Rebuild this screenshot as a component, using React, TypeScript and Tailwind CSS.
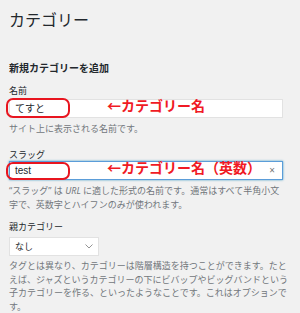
export default function App() {
  return (
    <div className="h-[313px] w-[300px] overflow-hidden bg-[#f1f1f1] pl-[9px] font-['Noto_Sans','Noto_Sans_CJK_JP',sans-serif] text-[#23282d]">
      <h1 className="mt-[8px] text-[16px] leading-[24px] font-normal">カテゴリー</h1>

      <h2 className="mt-[29px] text-[10px] leading-[14px] font-bold">新規カテゴリーを追加</h2>

      <div className="mt-[10px] text-[9px] leading-[12px]">名前</div>
      <div className="relative mt-[2px] h-[19px] w-[274px]">
        <div className="flex h-full items-center border border-[#e2e2e2] bg-white pl-[5px] text-[10px]">てすと</div>
        <div className="absolute left-[-3px] top-[-1px] h-[20px] w-[64px] rounded-[7px] border-2 border-[#e8151f]" />
        <div className="absolute left-[98px] top-[-3px] text-[14px] leading-[20px] font-bold text-[#f01a24]">←カテゴリー名</div>
      </div>
      <p className="mt-[5px] text-[9px] leading-[12px] text-[#72777c]">サイト上に表示される名前です。</p>

      <div className="mt-[14px] text-[9px] leading-[12px]">スラッグ</div>
      <div className="relative h-[19px] w-[274px]">
        <div className="flex h-full items-center border border-[#5b9dd9] bg-white pl-[5px] text-[10px] shadow-[0_0_2px_rgba(30,140,190,0.8)]">
          <span className="font-['Liberation_Sans',sans-serif]">test</span>
          <span className="ml-auto mr-[7px] text-[10px] text-[#777]">×</span>
        </div>
        <div className="absolute left-[-3px] top-[1px] h-[18px] w-[64px] rounded-[7px] border-2 border-[#e8151f]" />
        <div className="absolute left-[98px] top-[-3px] text-[14px] leading-[20px] font-bold text-[#f01a24]">←カテゴリー名（英数）</div>
      </div>
      <p className="mt-[4px] text-[9px] leading-[13.5px] text-[#72777c]">
        “スラッグ” は <i>URL</i> に適した形式の名前です。通常はすべて半角小文
        <br />
        字で、英数字とハイフンのみが使われます。
      </p>

      <div className="mt-[10px] text-[9px] leading-[12px]">親カテゴリー</div>
      <div className="mt-[4px] flex h-[19px] w-[90px] items-center border border-[#e2e2e2] bg-white pl-[5px] pr-[5px] text-[9px]">
        なし
        <svg className="ml-auto" width="8" height="5" viewBox="0 0 8 5" fill="none">
          <polyline points="0.5,0.5 4,4 7.5,0.5" stroke="#888" strokeWidth="0.9" />
        </svg>
      </div>
      <p className="mt-[3px] text-[9px] leading-[13.5px] text-[#72777c]">
        タグとは異なり、カテゴリーは階層構造を持つことができます。たと
        <br />
        えば、ジャズというカテゴリーの下にビバップやビッグバンドという
        <br />
        子カテゴリーを作る、といったようなことです。これはオプションで
        <br />
        す。
      </p>
    </div>
  );
}
